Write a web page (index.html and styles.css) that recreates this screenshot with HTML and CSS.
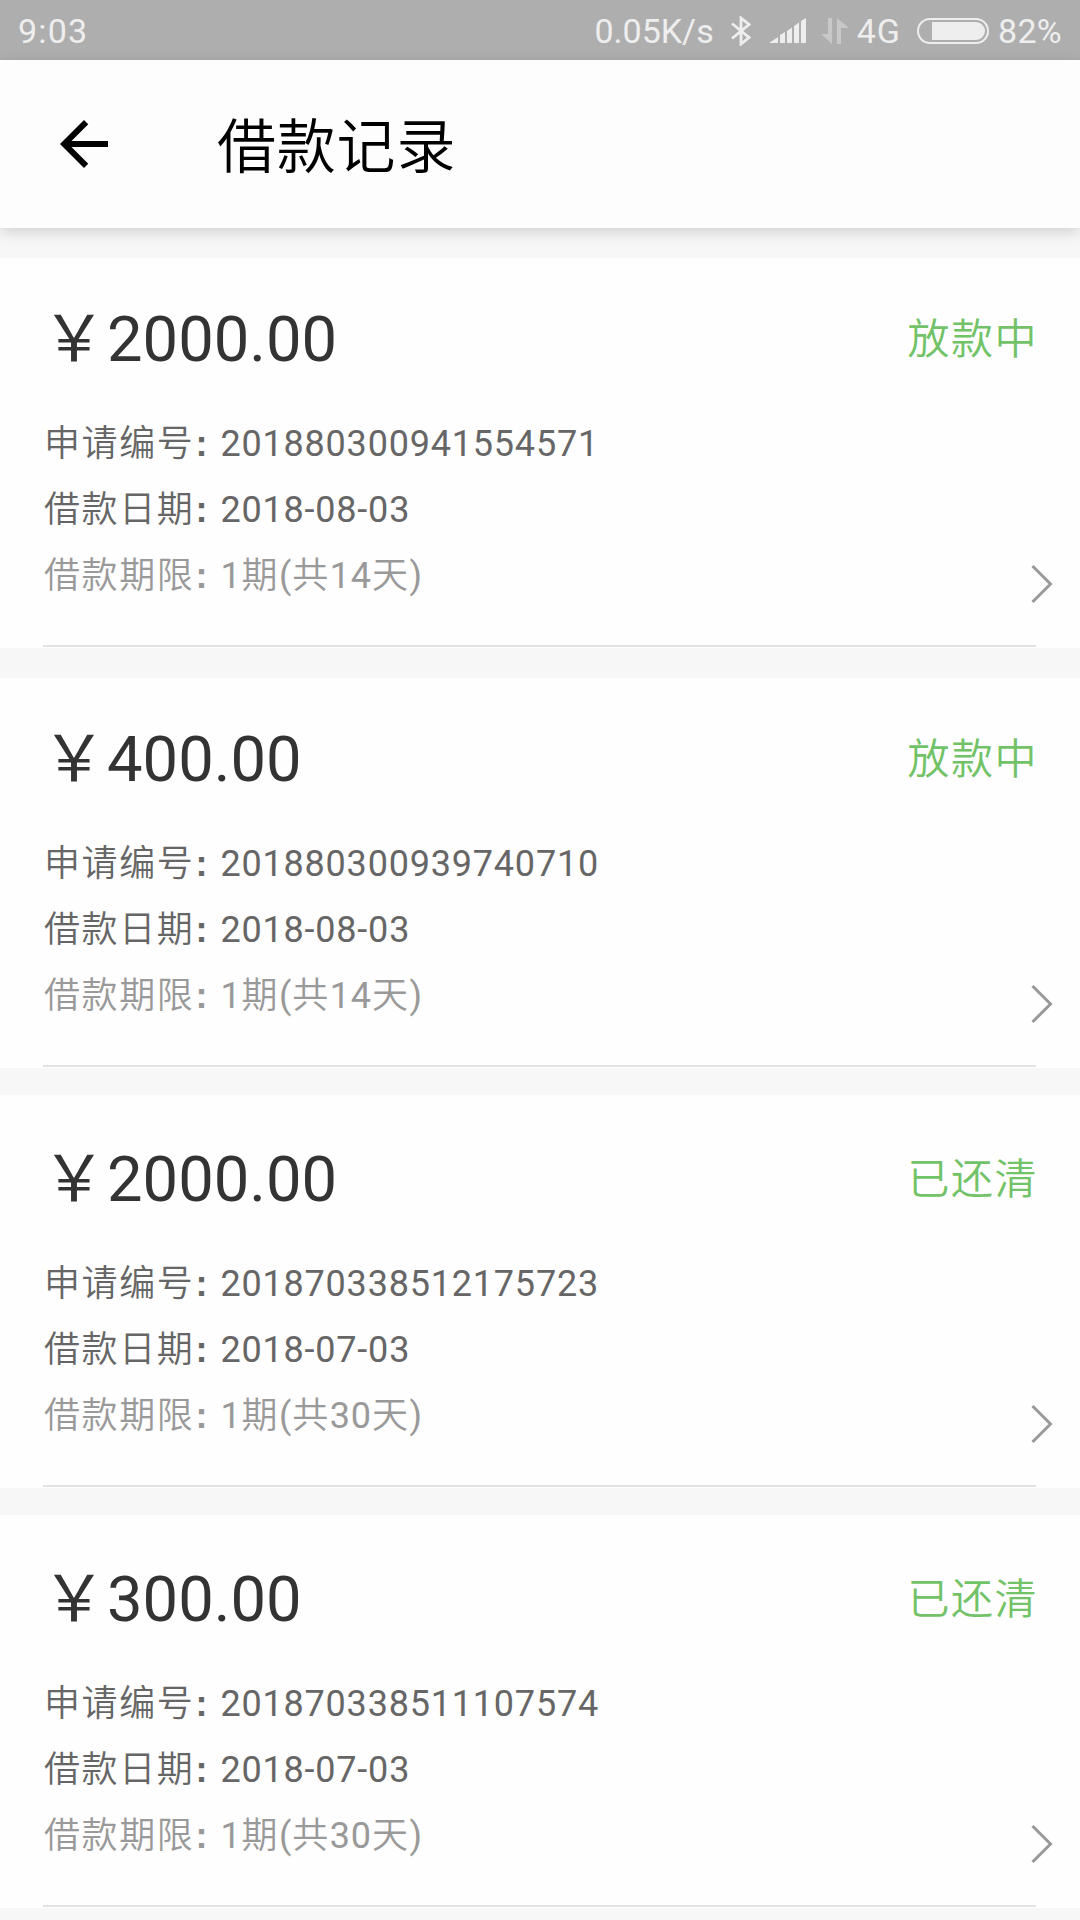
FILE: index.html
```html
<!DOCTYPE html>
<html lang="zh-CN">
<head>
  <meta charset="UTF-8">
  <meta name="viewport" content="width=device-width, initial-scale=1.0">
  <title>借款记录</title>
  <link rel="stylesheet" href="styles.css">
</head>
<body>
  <div class="status-bar">
    <span class="time">9:03</span>
    <span class="speed">0.05K/s</span>
    <svg class="bluetooth" width="20" height="30" viewBox="0 0 20 30"><path d="M1 7.500L18 21.500L10 28V2L18 8.500L1 22.500" fill="none" stroke="#eee" stroke-width="2.800"/></svg>
    <svg class="signal" width="37" height="25" viewBox="0 0 37 25"><path d="M0 25L9 19V25ZM11 25V17L16 14V25ZM18 25V13L23 9.500V25ZM25 25V8L30 4.500V25ZM32 25V3L37 0V25Z" fill="#eee"/></svg>
    <svg class="data" width="28" height="26" viewBox="0 0 28 26"><path d="M7 0H11V26L0 16H7ZM16 26V0L28 10H20V26Z" fill="#c8c8c8"/></svg>
    <span class="network">4G</span>
    <svg class="battery" width="72" height="26" viewBox="0 0 72 26"><rect x="1" y="1" width="70" height="24" rx="12" fill="none" stroke="#eee" stroke-width="2"/><path d="M15 4H59A9 9 0 0 1 59 22H15Z" fill="#eee"/></svg>
    <span class="percent">82%</span>
  </div>

  <div class="header">
    <svg class="back" width="72" height="72" viewBox="0 0 24 24"><path d="M20 11H7.830l5.590-5.590L12 4l-8 8 8 8 1.410-1.410L7.830 13H20v-2z"/></svg>
    <h1>借款记录</h1>
  </div>

  <div class="list">
    <div class="card">
      <div class="top">
        <div class="amount"><span class="yen">￥</span>2000.00</div>
        <div class="state">放款中</div>
      </div>
      <div class="row"><span class="label">申请编号</span><span class="colon">:</span>201880300941554571</div>
      <div class="row"><span class="label">借款日期</span><span class="colon">:</span>2018-08-03</div>
      <div class="row term"><span class="label">借款期限</span><span class="colon">:</span>1<span class="cn">期</span>(<span class="cn">共</span>14<span class="cn">天</span>)</div>
      <svg class="more" width="22" height="40" viewBox="0 0 22 40"><path d="M1.500 2L19.500 20L1.500 38" fill="none" stroke="#999" stroke-width="3"/></svg>
    </div>

    <div class="card">
      <div class="top">
        <div class="amount"><span class="yen">￥</span>400.00</div>
        <div class="state">放款中</div>
      </div>
      <div class="row"><span class="label">申请编号</span><span class="colon">:</span>201880300939740710</div>
      <div class="row"><span class="label">借款日期</span><span class="colon">:</span>2018-08-03</div>
      <div class="row term"><span class="label">借款期限</span><span class="colon">:</span>1<span class="cn">期</span>(<span class="cn">共</span>14<span class="cn">天</span>)</div>
      <svg class="more" width="22" height="40" viewBox="0 0 22 40"><path d="M1.500 2L19.500 20L1.500 38" fill="none" stroke="#999" stroke-width="3"/></svg>
    </div>

    <div class="card tall">
      <div class="top">
        <div class="amount"><span class="yen">￥</span>2000.00</div>
        <div class="state">已还清</div>
      </div>
      <div class="row"><span class="label">申请编号</span><span class="colon">:</span>201870338512175723</div>
      <div class="row"><span class="label">借款日期</span><span class="colon">:</span>2018-07-03</div>
      <div class="row term"><span class="label">借款期限</span><span class="colon">:</span>1<span class="cn">期</span>(<span class="cn">共</span>30<span class="cn">天</span>)</div>
      <svg class="more" width="22" height="40" viewBox="0 0 22 40"><path d="M1.500 2L19.500 20L1.500 38" fill="none" stroke="#999" stroke-width="3"/></svg>
    </div>

    <div class="card tall">
      <div class="top">
        <div class="amount"><span class="yen">￥</span>300.00</div>
        <div class="state">已还清</div>
      </div>
      <div class="row"><span class="label">申请编号</span><span class="colon">:</span>201870338511107574</div>
      <div class="row"><span class="label">借款日期</span><span class="colon">:</span>2018-07-03</div>
      <div class="row term"><span class="label">借款期限</span><span class="colon">:</span>1<span class="cn">期</span>(<span class="cn">共</span>30<span class="cn">天</span>)</div>
      <svg class="more" width="22" height="40" viewBox="0 0 22 40"><path d="M1.500 2L19.500 20L1.500 38" fill="none" stroke="#999" stroke-width="3"/></svg>
    </div>
  </div>
</body>
</html>
```

FILE: styles.css
```css
* {
  box-sizing: border-box;
}

body {
  margin: 0;
  height: 1920px;
  overflow: hidden;
  background: #f7f7f7;
  font-family: Roboto, "Noto Sans CJK SC", sans-serif;
}

svg {
  display: block;
  flex: none;
}

.status-bar {
  display: flex;
  align-items: center;
  height: 60px;
  padding: 1px 18px 0;
  background: #aeaeae;
  color: #eee;
  font-size: 34px;
  line-height: 58px;
}

.time {
  letter-spacing: 1.2px;
}

.speed {
  margin-left: auto;
}

.bluetooth {
  margin-left: 17px;
}

.signal {
  margin-left: 18px;
}

.data {
  margin-left: 15px;
}

.network {
  margin-left: 8px;
  letter-spacing: 1px;
}

.battery {
  margin-left: 16px;
}

.percent {
  margin-left: 9px;
  letter-spacing: 0.3px;
}

.header {
  position: relative;
  display: flex;
  align-items: center;
  height: 168px;
  padding-left: 48px;
  background: #fdfdfd;
  box-shadow: 0 4px 14px rgba(0, 0, 0, 0.16);
}

.header h1 {
  margin: -2px 0 0 97px;
  color: #000;
  font-family: "Noto Sans CJK SC", sans-serif;
  font-size: 59px;
  font-weight: 350;
  letter-spacing: 0.8px;
  line-height: 84px;
}

.list {
  display: flex;
  flex-direction: column;
  gap: 30px;
  padding-top: 30px;
}

.card {
  position: relative;
  flex: none;
  height: 390px;
  padding: 0 44px;
  background: #fefefe;
}

/* divider inside the bottom edge */
.card::after {
  content: "";
  position: absolute;
  left: 43px;
  right: 44px;
  bottom: 1px;
  height: 2px;
  background: #e2e2e2;
}

.card.tall {
  height: 393px;
  margin-top: -3px;
  padding-top: 3px;
}

.top {
  display: flex;
  justify-content: space-between;
  align-items: center;
  height: 149px;
  padding-top: 6px;
}

.amount {
  color: #333;
  font-size: 63.3px;
  line-height: 80px;
}

.yen {
  display: inline-block;
  width: 63px;
  padding-right: 2px;
  font-family: "Noto Sans CJK SC", sans-serif;
  font-size: 64px;
  font-weight: 400;
  text-indent: -2px;
}

.state {
  margin: 1px -2px 0 0;
  color: #72c267;
  font-family: "Noto Sans CJK SC", sans-serif;
  font-size: 42px;
  font-weight: 350;
  letter-spacing: 1.5px;
  line-height: 60px;
}

.row {
  height: 66px;
  color: #666;
  font-size: 36px;
  line-height: 66px;
  letter-spacing: 0.8px;
  white-space: nowrap;
}

.row.term {
  color: #999;
}

.label,
.cn {
  font-family: "Noto Sans CJK SC", sans-serif;
  font-weight: 350;
  letter-spacing: 1.6px;
}

.colon {
  display: inline-block;
  width: 26px;
  padding-left: 1px;
  font-family: "Liberation Sans", sans-serif;
  font-weight: 700;
}

.more {
  position: absolute;
  right: 27px;
  bottom: 44px;
}
```
